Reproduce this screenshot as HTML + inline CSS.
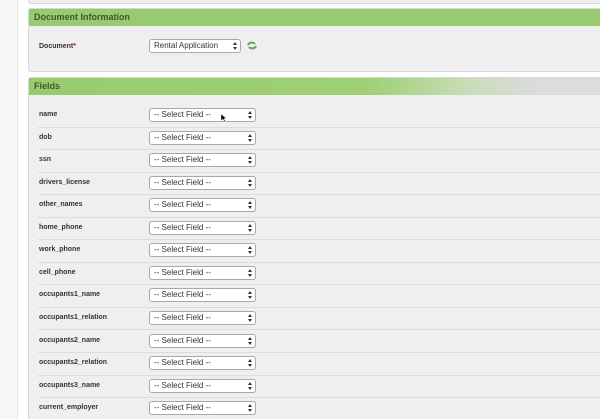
<!DOCTYPE html>
<html><head><style>
html,body{margin:0;padding:0;width:600px;height:419px;overflow:hidden}
body{background:#fff;position:relative;font-family:"Liberation Sans",sans-serif}
.strip{position:absolute;left:0;top:0;width:17px;height:419px;background:#f7f7f8;border-right:1px solid #e6e6e8}
.panel{position:absolute;left:28px;width:580px;background:#efeef1;border:1px solid #d8d8da;border-radius:3px;box-sizing:border-box}
.hdr{position:absolute;left:0;top:0;right:0;height:17px;font-weight:bold;font-size:9px;color:#3d5a2b;line-height:17px;padding-left:5px}
.lbl{position:absolute;left:39px;font-size:7px;font-weight:bold;color:#333}
.sel{position:absolute;left:149px;width:101px;height:12px;border:1px solid #a8a8aa;border-radius:3px;background:#fff;font-size:8px;color:#333;line-height:12px;padding-left:4px;box-sizing:content-box}
.sel:after{content:"";position:absolute;right:3px;top:2px;width:0;height:0;border-left:2px solid transparent;border-right:2px solid transparent;border-bottom:3px solid #333}
.sel:before{content:"";position:absolute;right:3px;top:7px;width:0;height:0;border-left:2px solid transparent;border-right:2px solid transparent;border-top:3px solid #333}
.sep{position:absolute;left:38px;right:0;height:1px;background:#dcdcde}
</style></head><body>
<div class="strip"></div>
<div class="panel" style="top:-10px;height:14px"></div>
<div class="panel" style="top:8px;height:64px">
 <div class="hdr" style="background:#98cb6f">Document Information</div>
</div>
<div class="lbl" style="top:43px">Document<span style="color:#c00">*</span></div>
<div class="sel" style="top:39px;width:86px">Rental Application</div>
<svg style="position:absolute;left:247px;top:41px" width="10" height="9" viewBox="0 0 10 9"><path d="M1 4 A4 3.5 0 0 1 8 3" stroke="#5aa85a" stroke-width="2" fill="none"/><path d="M9 5 A4 3.5 0 0 1 2 6" stroke="#5aa85a" stroke-width="2" fill="none"/></svg>
<div class="panel" style="top:77px;height:360px">
 <div class="hdr" style="background:linear-gradient(90deg,#98cb6f 0,#9fd075 340px,#c8ddb8 440px,#dcdcdc 510px,#dcdcdc 100%)">Fields</div>
</div>
<div id="rows"></div>
<script>
var n=["name","dob","ssn","drivers_license","other_names","home_phone","work_phone","cell_phone","occupants1_name","occupants1_relation","occupants2_name","occupants2_relation","occupants3_name","current_employer"];
var h="";
for(var i=0;i<n.length;i++){var c=115+i*22.55;
h+='<div class="lbl" style="top:'+(c-4)+'px">'+n[i]+'</div>';
h+='<div class="sel" style="top:'+(c-7)+'px">-- Select Field --</div>';
if(i<n.length-1)h+='<div class="sep" style="top:'+(c+11.5)+'px"></div>';}
document.getElementById("rows").innerHTML=h;
</script>
<svg style="position:absolute;left:221px;top:114px" width="6" height="9" viewBox="0 0 6 9"><path d="M0 0 L0 7 L2 5 L3.5 8 L4.5 7.5 L3 4.5 L5.5 4.5 Z" fill="#000" stroke="#fff" stroke-width="0.5"/></svg>
</body></html>
